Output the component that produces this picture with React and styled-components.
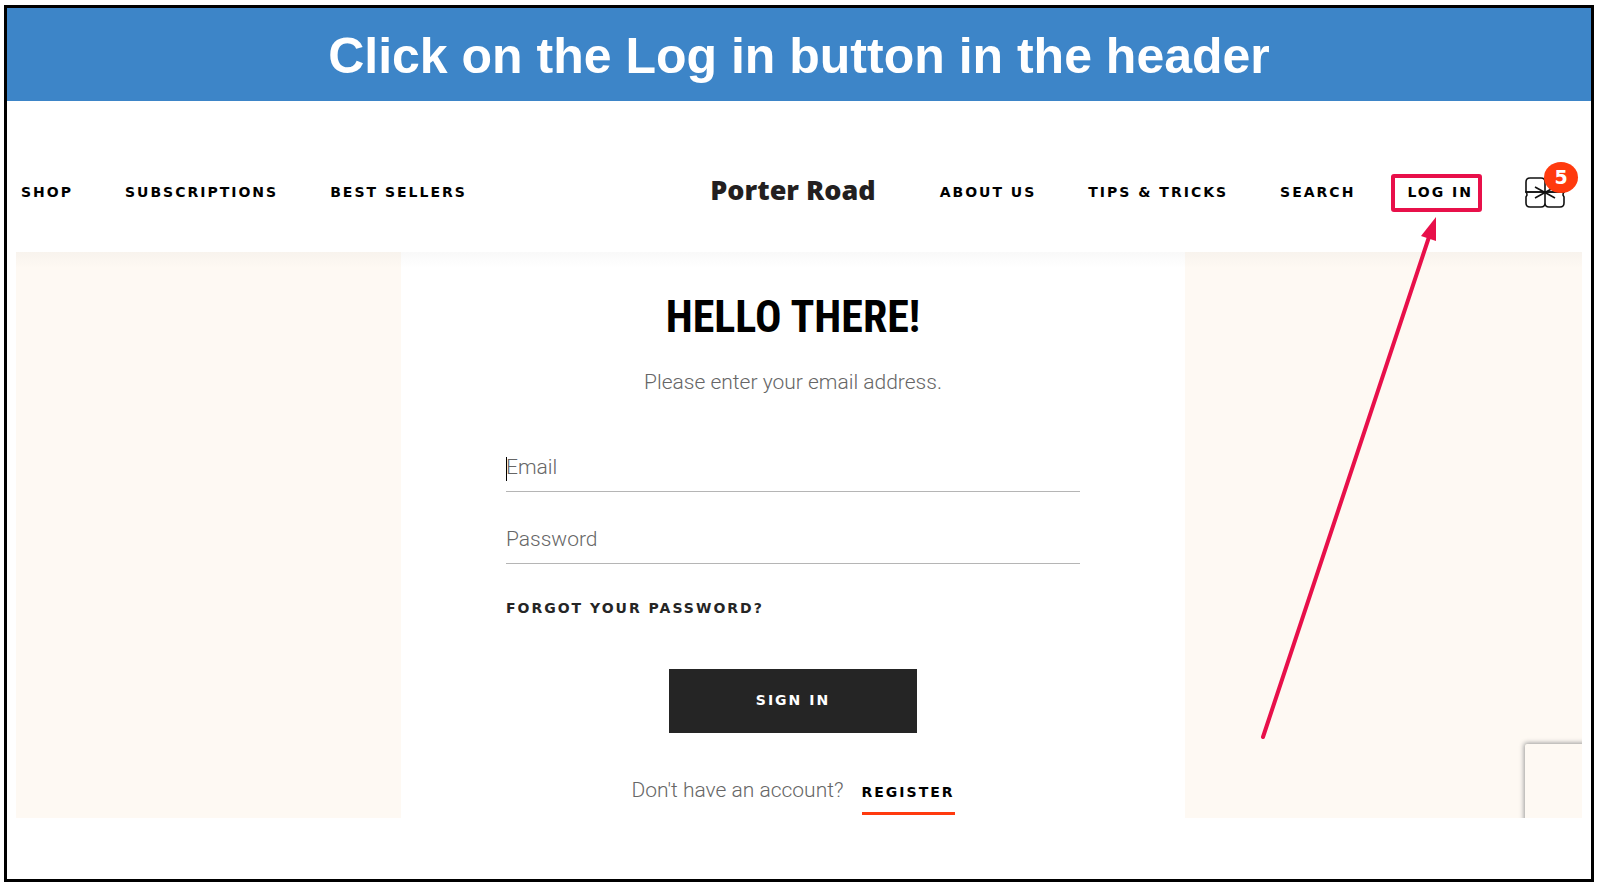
import React from "react";
import styled, { createGlobalStyle } from "styled-components";

const GlobalStyle = createGlobalStyle`
  *, *::before, *::after { box-sizing: border-box; }
  body {
    margin: 0;
    background: #fff;
    color: #000;
    font-family: "Liberation Sans", Arial, sans-serif;
  }
`;

const Frame = styled.div`
  margin: 5px 6px 7px 4px;
  padding-bottom: 61px;
  border: 3px solid #000;
`;

const Banner = styled.div`
  display: flex;
  align-items: center;
  justify-content: center;
  min-height: 93px;
  padding-top: 2px;
  background: #3d85c8;
  color: #fff;
  font-size: 50px;
  line-height: 60px;
  font-weight: 700;
  text-align: center;
`;

const Header = styled.header`
  display: grid;
  grid-template-columns: 1fr auto 1fr;
  align-items: center;
  padding: 76px 26px 45px 14px;
`;

const Nav = styled.nav`
  display: flex;
  align-items: center;
  justify-content: ${({ $end }) => ($end ? "flex-end" : "flex-start")};
  gap: 52px;
  height: 30px;
`;

const CapsLink = styled.a`
  color: ${({ $color }) => $color || "#000"};
  font-family: "DejaVu Sans", sans-serif;
  font-size: 14px;
  line-height: 20px;
  font-weight: 700;
  letter-spacing: 2px;
  text-decoration: none;
  white-space: nowrap;
`;

const Logo = styled.a`
  padding-bottom: 4px;
  color: #231f20;
  font-family: "Open Sans", sans-serif;
  font-size: 27px;
  line-height: 26px;
  font-weight: 800;
  text-decoration: none;
  white-space: nowrap;
`;

const Highlighted = styled.div`
  position: relative;
  display: flex;

  &::after {
    content: "";
    position: absolute;
    inset: -8px -9px -10px -16px;
    border: 4px solid #e8104a;
    border-radius: 3px;
    pointer-events: none;
  }
`;

const Arrow = styled.svg`
  position: absolute;
  top: 30px;
  right: 35px;
  z-index: 2;
  pointer-events: none;
`;

const Cart = styled.button`
  position: relative;
  display: flex;
  padding: 0;
  border: 0;
  background: none;
`;

const Badge = styled.span`
  position: absolute;
  top: -15px;
  right: -13px;
  width: 34px;
  height: 31px;
  border-radius: 50%;
  background: #ff3a0e;
  color: #fff;
  font-family: "DejaVu Sans", sans-serif;
  font-size: 19px;
  line-height: 30px;
  font-weight: 700;
  text-align: center;
`;

const Panel = styled.main`
  position: relative;
  overflow: hidden;
  margin: 0 9px;
  padding-right: 12px;
  background: #fef9f3;

  &::before {
    content: "";
    position: absolute;
    inset: 0 0 auto;
    height: 16px;
    background: linear-gradient(rgba(60, 60, 60, 0.03), transparent);
  }
`;

const Card = styled.form`
  display: flex;
  flex-direction: column;
  align-items: center;
  width: 50.4%;
  margin: 0 auto;
  padding: 41px 24px 3px;
  background: #fff;
`;

const Title = styled.h1`
  margin: 0 0 27px;
  font-family: "Roboto Condensed", Roboto, sans-serif;
  font-size: 44px;
  line-height: 48px;
  font-weight: 700;
`;

const Text = styled.p`
  margin: 0;
  color: #666;
  font-family: Roboto, sans-serif;
  font-size: 21px;
  line-height: 28px;
  font-weight: 300;
`;

const Fields = styled.div`
  display: flex;
  flex-direction: column;
  align-items: flex-start;
  gap: 22px;
  width: 100%;
  max-width: 574px;
  margin: 46px 0 34px;
`;

const Field = styled.div`
  position: relative;
  width: 100%;

  &::before {
    content: "";
    display: ${({ $caret }) => ($caret ? "block" : "none")};
    position: absolute;
    left: 0;
    top: 15px;
    width: 1px;
    height: 24px;
    background: #000;
  }
`;

const Input = styled.input`
  display: block;
  width: 100%;
  height: 50px;
  padding: 0;
  border: 0;
  border-bottom: 1px solid #b5b5b5;
  border-radius: 0;
  outline: 0;
  background: transparent;
  font-family: Roboto, sans-serif;
  font-size: 21px;
  font-weight: 300;

  &::placeholder { color: #666; opacity: 1; }
`;

const Forgot = styled.div`
  display: flex;
  width: 100%;
  max-width: 574px;
  margin-bottom: 51px;
`;

const SignIn = styled.button`
  width: 248px;
  height: 64px;
  padding: 0 0 2px;
  border: 0;
  background: #252525;
  color: #fff;
  font-family: "DejaVu Sans", sans-serif;
  font-size: 14px;
  font-weight: 700;
  letter-spacing: 2px;
`;

const RegisterRow = styled.div`
  display: flex;
  align-items: baseline;
  gap: 18px;
  margin-top: 43px;
`;

const Register = styled(CapsLink)`
  padding-bottom: 10px;
  border-bottom: 3px solid #ff3a0e;
`;

const Captcha = styled.aside`
  position: absolute;
  right: -8px;
  bottom: -8px;
  width: 65px;
  height: 82px;
  border-radius: 2px;
  background: #fef9f3;
  box-shadow: 0 0 5px 1px #999;
`;

const CartIcon = () => (
  <svg width="40" height="31" viewBox="0 0 40 31" fill="none" stroke="#111" strokeWidth="1.6">
    <path d="M20 15H1V5q0-4 4-4h11q4 0 4 4zM20 15V5q0-4 4-4h11q4 0 4 4v10z" />
    <path d="M1 15q1 1 1 3l-1 2v6q0 4 4 4h11q4 0 4-4V15zM20 15v11q0 4 4 4h11q4 0 4-4v-6l-1-2q0-2 1-3z" />
    <path d="M10 10l20 11M30 10L10 21" />
  </svg>
);

export default function App() {
  return (
    <>
      <GlobalStyle />
      <Frame>
        <Banner>Click on the Log in button in the header</Banner>
        <Header>
          <Nav aria-label="Store">
            <CapsLink href="#shop">SHOP</CapsLink>
            <CapsLink href="#subscriptions">SUBSCRIPTIONS</CapsLink>
            <CapsLink href="#best">BEST SELLERS</CapsLink>
          </Nav>
          <Logo href="#home">Porter Road</Logo>
          <Nav $end aria-label="Account">
            <CapsLink href="#about">ABOUT US</CapsLink>
            <CapsLink href="#tips">TIPS &amp; TRICKS</CapsLink>
            <CapsLink href="#search">SEARCH</CapsLink>
            <Highlighted>
              <CapsLink href="#login">LOG IN</CapsLink>
              <Arrow width="180" height="532" viewBox="0 0 180 532" aria-hidden="true">
                <path d="M5 525L171 25" stroke="#e8104a" strokeWidth="4" strokeLinecap="round" />
                <path d="M178 5L163 24L178 29z" fill="#e8104a" />
              </Arrow>
            </Highlighted>
            <Cart type="button" aria-label="Cart">
              <CartIcon />
              <Badge>5</Badge>
            </Cart>
          </Nav>
        </Header>
        <Panel>
          <Card>
            <Title>HELLO THERE!</Title>
            <Text>Please enter your email address.</Text>
            <Fields>
              <Field $caret>
                <Input type="email" placeholder="Email" aria-label="Email" />
              </Field>
              <Field>
                <Input type="password" placeholder="Password" aria-label="Password" />
              </Field>
            </Fields>
            <Forgot>
              <CapsLink href="#forgot" $color="#252525">FORGOT YOUR PASSWORD?</CapsLink>
            </Forgot>
            <SignIn type="button">SIGN IN</SignIn>
            <RegisterRow>
              <Text>Don't have an account?</Text>
              <Register href="#register">REGISTER</Register>
            </RegisterRow>
          </Card>
          <Captcha />
        </Panel>
      </Frame>
    </>
  );
}
